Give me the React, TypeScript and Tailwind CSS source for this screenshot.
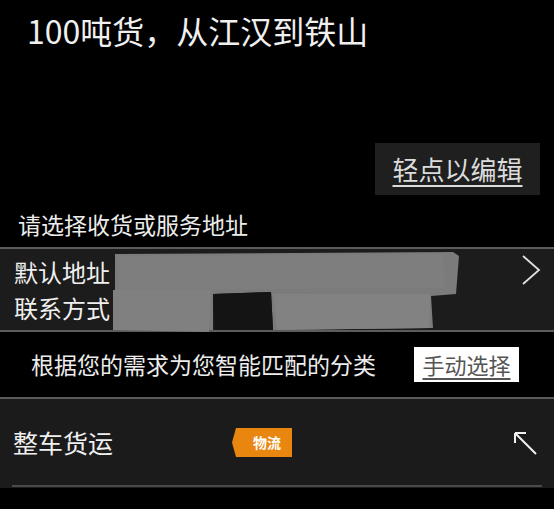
const font = { fontFamily: '"Noto Sans CJK SC", "Noto Sans", sans-serif' };

function Redaction() {
  return (
    <svg width="350" height="82" viewBox="0 0 350 82" className="absolute left-[113px] top-[1px]">
      <path d="M2 4 L340 2 L346 6 L343 44 L318 46 L320 78 L160 80 L158 42 L100 44 L100 80 L2 80 Z" fill="#7b7b7b" />
      <path d="M0 40 L98 40 L96 82 L0 80 Z" fill="#808080" />
      <path d="M100 44 L158 42 L160 80 L102 80 Z" fill="#141414" />
      <path d="M160 44 L318 44 L316 78 L164 80 Z" fill="#828282" />
      <path d="M4 6 L330 4 L332 38 L6 40 Z" fill="#7e7e7e" />
    </svg>
  );
}

export default function App() {
  return (
    <div className="w-[554px] h-[509px] bg-black overflow-hidden text-[#f0f0f0]" style={font}>
      <div className="pl-[27px] pt-[10px] h-[60px] text-[32px] leading-[40px]">100吨货，从江汉到铁山</div>

      <div className="flex justify-end pr-[14px] pt-[83px]">
        <div className="w-[165px] h-[52px] bg-[#1f1f1f] flex items-center justify-center">
          <span className="text-[26px] leading-none text-[#dcdcdc] underline underline-offset-[5px] decoration-2">轻点以编辑</span>
        </div>
      </div>

      <div className="pl-[18px] pt-[14px] h-[52px] text-[23px] leading-[30px] text-[#ececec]">请选择收货或服务地址</div>

      <div className="relative h-[85px] bg-[#1c1c1c] border-y-2 border-[#5c5c5c] flex flex-col justify-center pl-[14px] gap-[6px]">
        <div className="text-[24px] leading-[30px]">默认地址</div>
        <div className="text-[24px] leading-[30px]">联系方式</div>
        <Redaction />
        <svg className="absolute left-[521px] top-[6px]" width="20" height="30" viewBox="0 0 20 30" fill="none" stroke="#e0e0e0" strokeWidth="1.8">
          <path d="M2 1 L18 15 L2 29" />
        </svg>
      </div>

      <div className="h-[65px] flex items-center pl-[31px] pb-[1px]">
        <span className="text-[23px] leading-[30px] text-[#ececec]">根据您的需求为您智能匹配的分类</span>
        <div className="ml-[38px] w-[105px] h-[35px] bg-white flex items-center justify-center">
          <span className="text-[22px] leading-none text-[#555] underline underline-offset-[4px]">手动选择</span>
        </div>
      </div>

      <div className="h-[91px] bg-[#1b1b1b] border-t-2 border-[#5a5a5a] flex flex-col">
        <div className="flex-1 flex items-center pl-[13px] pr-[16px]">
          <span className="text-[25px] leading-[32px] w-[219px]">整车货运</span>
          <div className="flex items-center">
            <svg width="10" height="29" viewBox="0 0 10 29">
              <path d="M10 0 L10 29 L4 29 L0 14.5 L4 0 Z" fill="#e8860f" />
            </svg>
            <div className="h-[29px] w-[50px] bg-[#e8860f] flex items-center justify-center text-[14px] font-bold text-white">物流</div>
          </div>
          <svg className="ml-auto mt-[4px]" width="24" height="24" viewBox="0 0 24 24" fill="none" stroke="#f0f0f0" strokeWidth="2">
            <path d="M1 1 L22 22 M1 1 L1 11 M1 1 L12 1" />
          </svg>
        </div>
        <div className="mx-[12px] mb-[1px] h-[2px] bg-[#4a4a4a]" />
      </div>
    </div>
  );
}
